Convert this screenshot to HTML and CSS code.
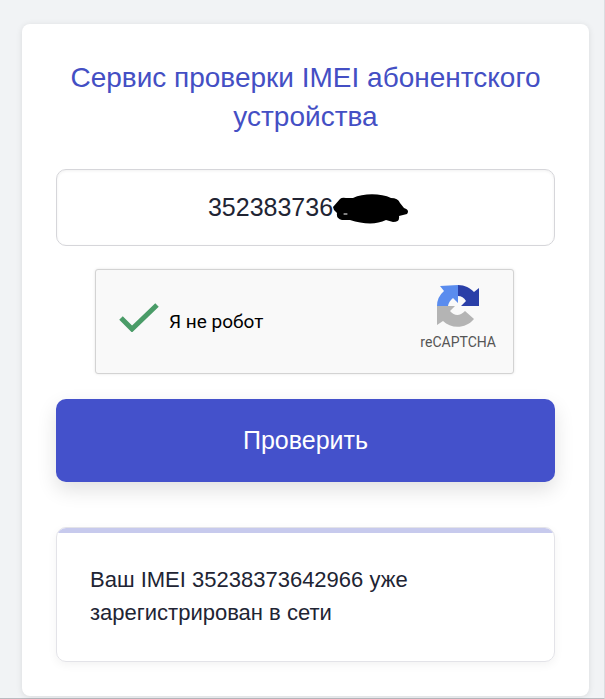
FILE: index.html
```
<!DOCTYPE html>
<html lang="ru">
<head>
    <meta charset="UTF-8">
    <meta name="viewport" content="width=device-width, initial-scale=1.0">
    <title>Сервис проверки IMEI</title>
    <link rel="stylesheet" href="styles.css">
</head>
<body>
    <main class="page">
        <div class="card">
            <h1>Сервис проверки IMEI абонентского устройства</h1>

            <form class="check-form">
                <!-- IMEI field, last digits are painted over -->
                <div class="imei-field">
                    <input type="text" id="imei" value="352383736" aria-label="IMEI">
                    <svg class="scribble" viewBox="0 0 76 30" aria-hidden="true">
                        <path d="M0 13 L7 5 Q9 3 13 4 L20 4 C30 -1 48 -1 58 4 Q65 4 67 9 L71 14 Q77 16 74 20 L66 22 Q67 28 60 28 L53 26 C43 31 30 30 17 26 L9 26 Q3 25 4 19 L1 16 Z"/>
                        <path class="gap" d="M11 20 L14 20"/>
                    </svg>
                </div>

                <!-- Captcha -->
                <div class="captcha">
                    <label class="captcha-label">
                        <input type="checkbox" class="captcha-check" checked>
                        <svg class="tick" viewBox="0 0 40 30" aria-hidden="true">
                            <path d="M2 16 L13 27 L38 3"/>
                        </svg>
                        <span>Я не робот</span>
                    </label>
                    <div class="captcha-brand">
                        <svg class="captcha-logo" viewBox="0 0 42 42" aria-hidden="true">
                            <path fill="#2a3fa8" d="M21 0 C28 0 33 3 37 7 L42 3 V21 H24 L29 16 Q26 11 21 11 Z"/>
                            <path fill="#5a8cee" d="M21 0 V18 L16 13 Q12 16 11 21 H0 Q0 12 7 6 L3 1 Z"/>
                            <path fill="#b4b4b4" d="M0 21 H18 L13 26 Q20 34 28 26 L37 34 C29 44 14 44 6 36 L0 40 Z"/>
                        </svg>
                        <span>reCAPTCHA</span>
                    </div>
                </div>

                <button type="button" class="btn-check">Проверить</button>
            </form>

            <!-- Result -->
            <div class="result">
                <p>Ваш IMEI 35238373642966 уже зарегистрирован в сети</p>
            </div>
        </div>
    </main>
</body>
</html>
```
FILE: styles.css
```
/* General Styles */
* {
    box-sizing: border-box;
}

body {
    margin: 0;
    font-family: "Liberation Sans", Arial, sans-serif;
    background: #f1f3f5;
    color: #212433;
}

.page {
    min-height: 100vh;
    padding: 24px 15px 2px 22px;
    border-right: 1px solid #dcdde1;
    border-bottom: 1px solid #b9bac0;
}

.card {
    padding: 34px;
    background: #fff;
    border-radius: 8px;
    box-shadow: 0 1px 6px rgba(0, 0, 0, 0.1);
}

h1 {
    margin: 0 0 33px;
    font-size: 28px;
    line-height: 39px;
    font-weight: 400;
    text-align: center;
    color: #444fc4;
}

/* Form */
.check-form {
    display: flex;
    flex-direction: column;
}

.imei-field {
    position: relative;
    margin-bottom: 23px;
}

/* the right padding leaves room for the scribble */
.imei-field input {
    display: block;
    width: 100%;
    height: 77px;
    padding: 0 86px 0 16px;
    border: 1px solid #d6d6da;
    border-radius: 10px;
    background: #fff;
    box-shadow: inset 0 1px 3px rgba(0, 0, 0, 0.06);
    font-family: inherit;
    font-size: 25px;
    text-align: center;
    color: #212433;
    outline: none;
}

.scribble {
    position: absolute;
    top: 25px;
    left: calc(50% + 27px);
    width: 76px;
    height: 30px;
}

.scribble .gap {
    stroke: #fff;
    stroke-width: 1;
    stroke-linecap: round;
}

/* Captcha */
.captcha {
    display: flex;
    justify-content: space-between;
    margin: 0 41px 25px 39px;
    padding: 15px 17px 22px 23px;
    border: 1px solid #d3d3d3;
    border-radius: 3px;
    background: #f9f9f9;
    box-shadow: 0 0 3px rgba(0, 0, 0, 0.1);
    font-family: Roboto, sans-serif;
}

.captcha-label {
    display: flex;
    align-items: center;
    gap: 10px;
    padding-top: 6px;
    font-size: 19px;
    color: #000;
}

.captcha-check {
    position: absolute;
    opacity: 0;
}

.tick {
    width: 40px;
    height: 30px;
    margin-bottom: 8px;
    fill: none;
    stroke: #4a9c68;
    stroke-width: 5;
}

.captcha-brand {
    display: flex;
    flex-direction: column;
    align-items: center;
    gap: 6px;
    font-size: 14px;
    line-height: 18px;
    color: #555;
}

.captcha-logo {
    width: 42px;
    height: 42px;
}

.btn-check {
    height: 83px;
    border: none;
    border-radius: 10px;
    background: #4451cb;
    box-shadow: 0 8px 20px rgba(0, 0, 0, 0.12);
    font-family: inherit;
    font-size: 25px;
    color: #fff;
    cursor: pointer;
}

.btn-check:hover {
    background: #3a46b8;
}

/* Result */
.result {
    margin-top: 45px;
    border: 1px solid #e3e3e8;
    border-radius: 10px;
    box-shadow: 0 3px 10px rgba(0, 0, 0, 0.05);
    overflow: hidden;
}

.result::before {
    content: "";
    display: block;
    height: 5px;
    background: #c7caed;
}

.result p {
    margin: 0;
    padding: 30px 33px 32px;
    font-size: 22px;
    line-height: 33px;
}
```
